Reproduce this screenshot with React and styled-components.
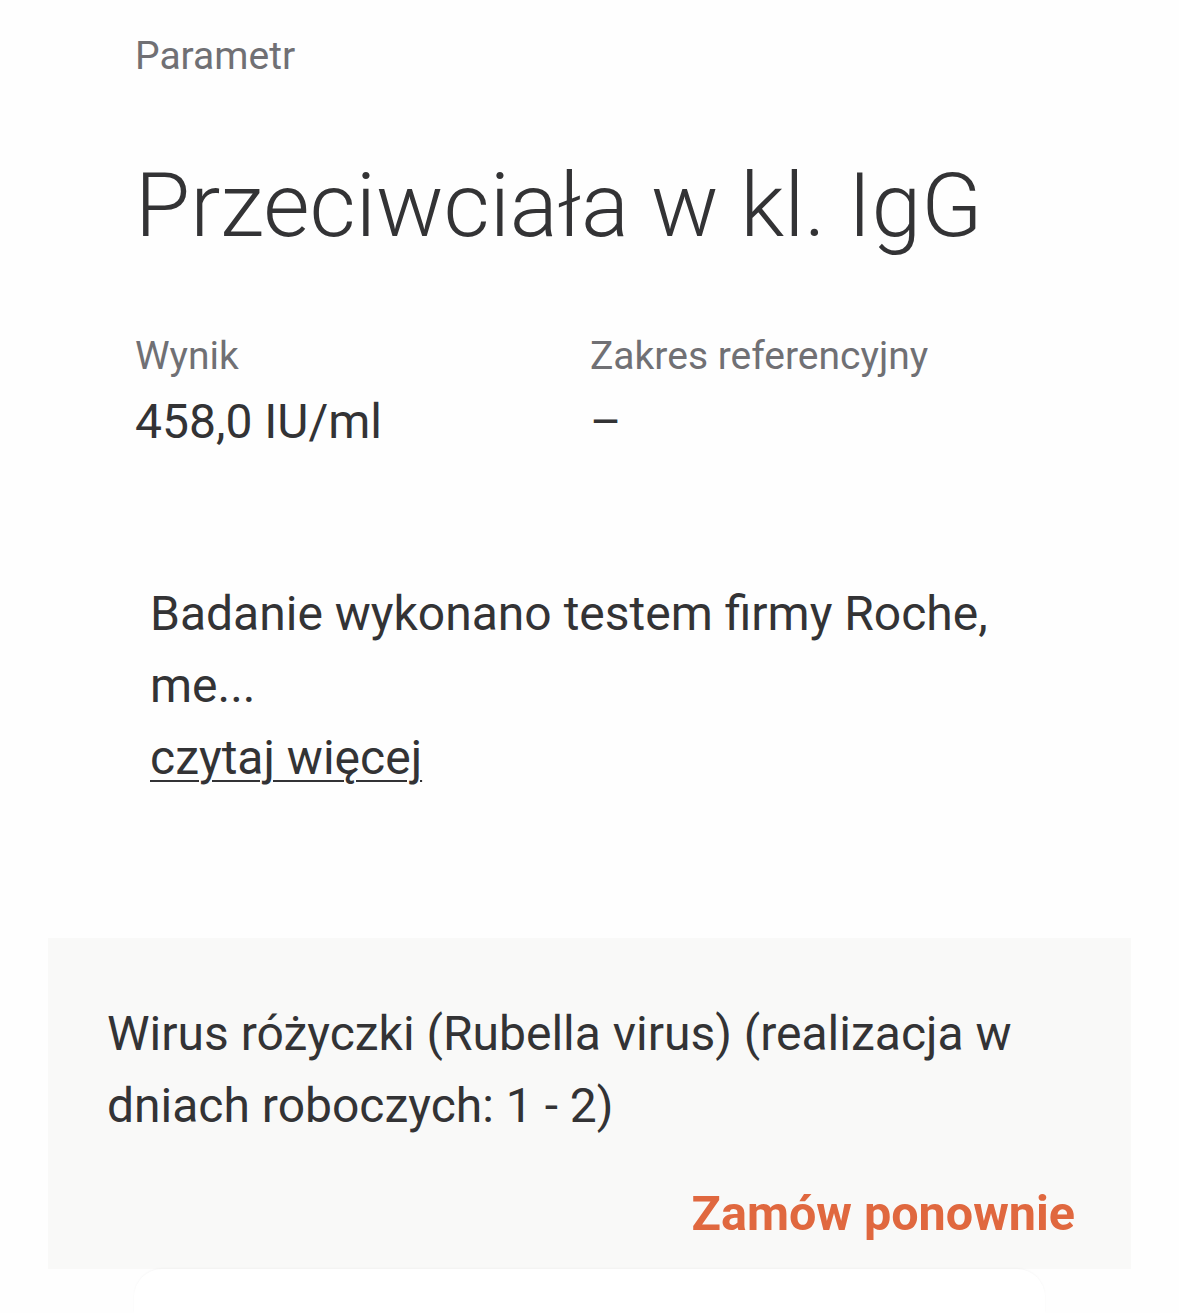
import React from 'react';
import styled, { createGlobalStyle } from 'styled-components';

const GlobalStyle = createGlobalStyle`
  html, body {
    margin: 0;
    padding: 0;
    background: #fefefe;
    font-family: Roboto, "Noto Sans", "Liberation Sans", sans-serif;
    color: #333335;
  }
`;

const Page = styled.div`
  width: 1179px;
  height: 1313px;
  overflow: hidden;
  display: flex;
  flex-direction: column;
`;

const Details = styled.section`
  padding: 34px 0 0 135px;
`;

const Label = styled.div`
  font-size: 39px;
  line-height: 44px;
  color: #707074;
`;

const Title = styled.h1`
  margin: 78px 0 0;
  font-size: 89.6px;
  font-weight: 300;
  line-height: 100px;
  color: #333335;
`;

const ResultRow = styled.div`
  display: grid;
  grid-template-columns: 455px 1fr;
  margin-top: 78px;
`;

const Value = styled.div`
  margin-top: 16px;
  font-size: 48px;
  line-height: 56px;
  color: #333335;
`;

const Note = styled.p`
  margin: 128px 0 0 15px;
  width: 900px;
  font-size: 48px;
  line-height: 72px;
  color: #333335;
`;

const ReadMore = styled.a`
  display: block;
  color: #333335;
  text-decoration: underline;
  text-decoration-thickness: 2px;
  text-underline-offset: 6px;
`;

const OrderCard = styled.section`
  margin: 144px 48px 0;
  background: #f9f9f8;
  padding: 60px 56px 25px 59px;
  display: flex;
  flex-direction: column;
`;

const OrderName = styled.div`
  font-size: 48px;
  line-height: 72px;
  color: #333335;
  width: 930px;
`;

const OrderAgain = styled.button`
  align-self: flex-end;
  margin-top: 42px;
  border: 0;
  background: none;
  padding: 0;
  font-family: inherit;
  font-size: 48.5px;
  font-weight: 700;
  line-height: 60px;
  color: #e0683f;
  cursor: pointer;
`;

const NextCard = styled.div`
  margin: 0 134px;
  height: 60px;
  background: #fff;
  border-radius: 28px 28px 0 0;
  box-shadow: 0 -1px 2px rgba(0, 0, 0, 0.03);
`;

export default function App() {
  return (
    <Page>
      <GlobalStyle />
      <Details>
        <Label>Parametr</Label>
        <Title>Przeciwciała w kl. IgG</Title>
        <ResultRow>
          <div>
            <Label>Wynik</Label>
            <Value>458,0 IU/ml</Value>
          </div>
          <div>
            <Label>Zakres referencyjny</Label>
            <Value>–</Value>
          </div>
        </ResultRow>
        <Note>
          Badanie wykonano testem firmy Roche, me...
          <ReadMore href="#">czytaj więcej</ReadMore>
        </Note>
      </Details>
      <OrderCard>
        <OrderName>Wirus różyczki (Rubella virus) (realizacja w dniach roboczych: 1 - 2)</OrderName>
        <OrderAgain>Zamów ponownie</OrderAgain>
      </OrderCard>
      <NextCard />
    </Page>
  );
}
